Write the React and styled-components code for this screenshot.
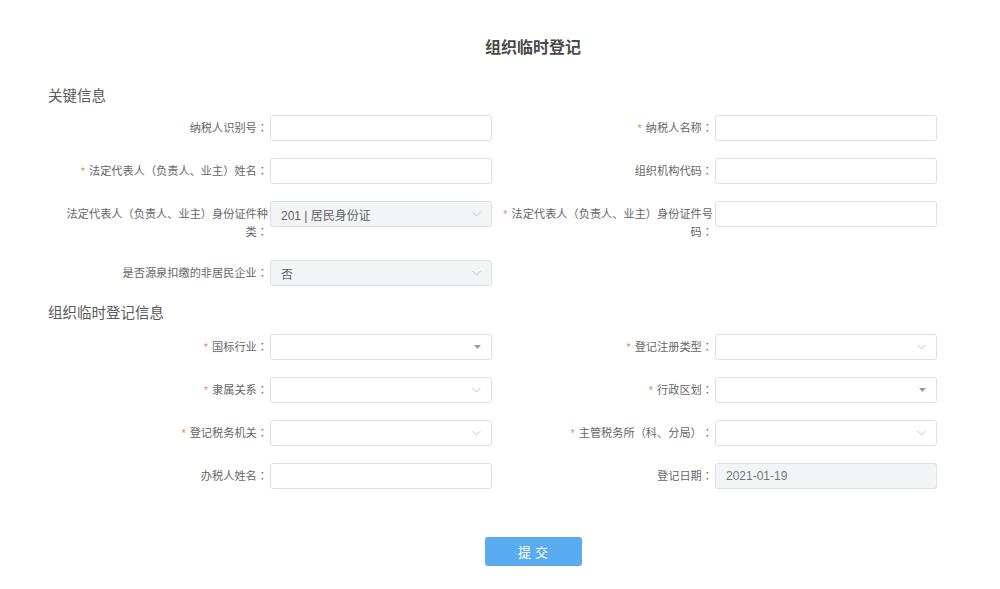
import styled, { createGlobalStyle } from 'styled-components';

const GlobalStyle = createGlobalStyle`
  body {
    margin: 0;
    background: #fff;
    font-family: "Liberation Sans", "Noto Sans CJK SC", sans-serif;
    text-spacing-trim: space-all;
  }
`;

const Page = styled.div`
  width: 1000px;
  padding: 37px 0 40px;
  box-sizing: border-box;
`;

const Title = styled.h1`
  margin: 0 0 27px;
  padding-left: 66px;
  text-align: center;
  font-size: 16px;
  line-height: 22px;
  font-weight: bold;
  color: #4a4a4a;
`;

const SectionTitle = styled.h2`
  margin: ${(p) => (p.$first ? '0' : '17px')} 0 ${(p) => (p.$first ? '9px' : '11px')};
  padding-left: 48px;
  font-size: 14.5px;
  line-height: 20px;
  font-weight: normal;
  color: #5a5a5a;
`;

const Grid = styled.div`
  display: grid;
  grid-template-columns: 436px 436px;
  column-gap: 9px;
  row-gap: 17px;
  padding-left: 56px;
`;

const Field = styled.div`
  display: flex;
  align-items: flex-start;
  gap: 2px;
`;

const Label = styled.label`
  flex: none;
  width: 212px;
  box-sizing: border-box;
  padding: 4px 0 ${(p) => (p.$wrap ? '2px' : '0')};
  text-align: right;
  font-size: 11.2px;
  line-height: 18px;
  color: #666;
`;

const Colon = styled.span`
  font-family: "Noto Sans CJK TC", "Noto Sans CJK SC", sans-serif;
  line-height: 1;
`;

const Star = styled.span`
  color: #f0893b;
  font-size: 11px;
  margin-right: 4px;
`;

const Box = styled.div`
  flex: none;
  position: relative;
  width: 222px;
  height: 26px;
  box-sizing: border-box;
  border: 1px solid #dcdfe6;
  border-radius: 3px;
  background: ${(p) => (p.$disabled ? '#f3f4f6' : '#fff')};
  padding: 0 10px;
  display: flex;
  align-items: center;
  font-size: 12px;
  color: ${(p) => (p.$muted ? '#777' : '#606266')};
`;

const Arrow = styled.span`
  position: absolute;
  right: 10px;
  top: 50%;
  transform: translateY(-50%);
  display: flex;
`;

const Actions = styled.div`
  display: flex;
  justify-content: center;
  padding-left: 66px;
  margin-top: 48px;
`;

const Button = styled.button`
  width: 97px;
  height: 29px;
  border: none;
  border-radius: 3px;
  background: #5aacf1;
  color: #fff;
  font-family: "Noto Sans CJK SC", sans-serif;
  font-size: 13px;
  letter-spacing: 4px;
  text-indent: 4px;
  cursor: pointer;
`;

function Chevron() {
  return (
    <svg width="9" height="5" viewBox="0 0 9 5">
      <polyline points="0.5,0.5 4.5,4.5 8.5,0.5" fill="none" stroke="#c0c4cc" strokeWidth="1" />
    </svg>
  );
}

function Caret() {
  return (
    <svg width="7" height="4" viewBox="0 0 7 4">
      <polygon points="0,0 7,0 3.5,4" fill="#9a9a9a" />
    </svg>
  );
}

function FormField({ label, required, type, value, disabled, wrap }) {
  return (
    <Field>
      <Label $wrap={wrap}>
        {required && <Star>*</Star>}
        {label}
        <Colon>：</Colon>
      </Label>
      <Box $disabled={disabled} $muted={type === 'date'}>
        {value}
        {type === 'select' && (
          <Arrow>
            <Chevron />
          </Arrow>
        )}
        {type === 'caret' && (
          <Arrow>
            <Caret />
          </Arrow>
        )}
      </Box>
    </Field>
  );
}

const keyFields = [
  { label: '纳税人识别号' },
  { label: '纳税人名称', required: true },
  { label: '法定代表人（负责人、业主）姓名', required: true },
  { label: '组织机构代码' },
  { label: '法定代表人（负责人、业主）身份证件种类', type: 'select', value: '201 | 居民身份证', disabled: true, wrap: true },
  { label: '法定代表人（负责人、业主）身份证件号码', required: true, wrap: true },
  { label: '是否源泉扣缴的非居民企业', type: 'select', value: '否', disabled: true },
];

const regFields = [
  { label: '国标行业', required: true, type: 'caret' },
  { label: '登记注册类型', required: true, type: 'select' },
  { label: '隶属关系', required: true, type: 'select' },
  { label: '行政区划', required: true, type: 'caret' },
  { label: '登记税务机关', required: true, type: 'select' },
  { label: '主管税务所（科、分局）', required: true, type: 'select' },
  { label: '办税人姓名' },
  { label: '登记日期', type: 'date', value: '2021-01-19', disabled: true },
];

export default function App() {
  return (
    <>
      <GlobalStyle />
      <Page>
        <Title>组织临时登记</Title>
        <SectionTitle $first>关键信息</SectionTitle>
        <Grid>
          {keyFields.map((f) => (
            <FormField key={f.label} {...f} />
          ))}
        </Grid>
        <SectionTitle>组织临时登记信息</SectionTitle>
        <Grid>
          {regFields.map((f) => (
            <FormField key={f.label} {...f} />
          ))}
        </Grid>
        <Actions>
          <Button>提交</Button>
        </Actions>
      </Page>
    </>
  );
}
